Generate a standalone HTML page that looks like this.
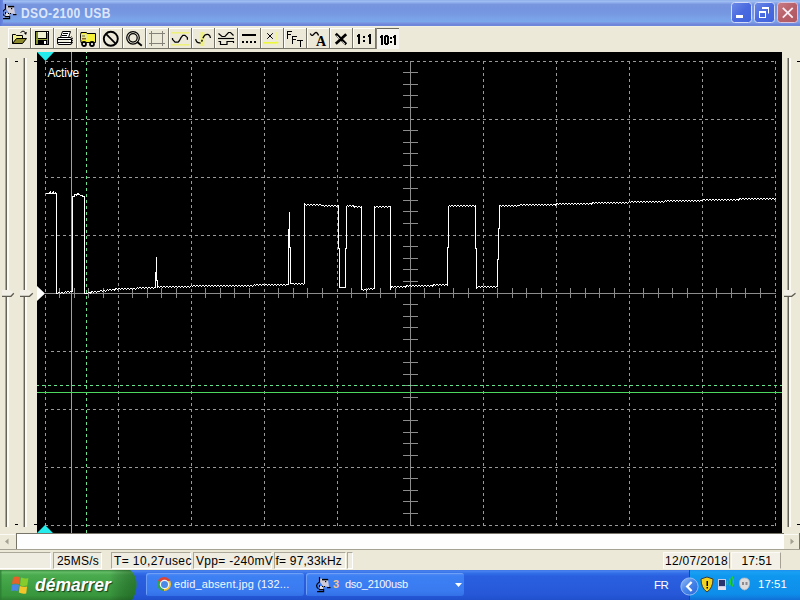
<!DOCTYPE html>
<html><head><meta charset="utf-8">
<style>
*{margin:0;padding:0;box-sizing:border-box}
html,body{width:800px;height:600px;overflow:hidden;background:#ece9d8;font-family:"Liberation Sans",sans-serif}
.abs{position:absolute}
#title{position:absolute;left:0;top:0;width:800px;height:26px;
 background:linear-gradient(to bottom,#90b0ec 0,#9ebcf2 1.5px,#8aa8e8 3px,#7896de 4.5px,#7594e0 8px,#7698e2 14px,#7aa2e8 18px,#7aa6ea 21.5px,#7a94e0 23px,#6e86da 24.5px,#6e86da 26px)}
#title .t{position:absolute;left:21px;top:5px;font-size:14px;font-weight:bold;color:#dde6fa;white-space:nowrap;letter-spacing:0.4px;transform:scaleX(0.86);transform-origin:0 0}
.wb{position:absolute;top:2px;width:21px;height:21px;border:1px solid #cdd8f6;border-radius:3px;background:#5476e0}
.tb{position:absolute;top:28px;width:23px;height:22px;border-style:solid;border-width:1px 1px 1px 1px;border-color:#ffffff #76746a #76746a #ffffff;background:#ece9d8}
.tb.p{border-color:#76746a #ffffff #ffffff #76746a;border-width:1px 1px 1px 2px;background:#f4f2ea}
#scope{position:absolute;left:37px;top:52px;width:745px;height:481px;background:#000}
.st{position:absolute;top:552px;height:17px;border-style:solid;border-width:1px;border-color:#aca899 #fff #fff #aca899;font-size:12px;line-height:15px;padding-top:1px;color:#000;white-space:nowrap;padding-left:4px;background:#efece2}
#taskbar{position:absolute;left:0;top:570px;width:800px;height:30px;
 background:linear-gradient(to bottom,#3a70e2 0,#4a84f0 1px,#3470e8 3px,#2a60e0 6px,#2658d8 24px,#2050cc 30px)}
.tbtn{position:absolute;top:3px;width:158px;height:23px;border-radius:3px;background:linear-gradient(to bottom,#5a8ef4 0,#3c80f4 3px,#3a7af0 18px,#3270e8 23px);box-shadow:inset 1px 1px 0 #6ea0f8}
.tbtn span{position:absolute;top:5px;font-size:11px;color:#f4f8ff;white-space:nowrap;letter-spacing:-0.3px}
.chrome{left:11px;top:4px!important;width:14px;height:14px;border-radius:50%;background:conic-gradient(from -60deg,#dc4434 0 120deg,#f2c228 120deg 240deg,#2fa352 240deg 360deg)}
.chrome::after{content:"";position:absolute;left:3.5px;top:3.5px;width:7px;height:7px;border-radius:50%;background:#4a8ae6;box-shadow:0 0 0 1.2px #f4f4f4}
</style></head><body>
<div id="title">
 <svg class="abs" style="left:0;top:0" width="20" height="26">
  <polygon points="6,5.5 14,6.5 15,14 9,13 6,9" fill="#cfcbd8"/>
  <rect x="6" y="13" width="3" height="3" fill="#dedae2"/>
  <g fill="none" stroke="#000" stroke-width="1.2">
   <path d="M5.5 4 V9 Q2.6 10.5 2.6 12.8 Q2.8 15 4.5 15.8"/>
   <path d="M3 18.6 H9.6 V16.6 H4.8"/>
   <line x1="8" y1="6.6" x2="14.2" y2="6.6" stroke-width="1.5"/>
   <line x1="13" y1="14.6" x2="16.5" y2="14.6"/>
  </g>
  <rect x="11" y="8" width="1.2" height="1.2" fill="#000"/><rect x="5" y="12" width="1" height="2" fill="#000"/><rect x="8" y="13" width="1" height="1" fill="#000"/><rect x="10" y="13" width="1" height="1" fill="#000"/>
 </svg>
 <div class="abs" style="left:0;top:0;width:3px;height:26px;background:linear-gradient(to right,#5a78d6,#6c8ade)"></div>
 <div class="t">DSO-2100 USB</div>
 <svg class="abs" style="left:730px;top:1px" width="70" height="24">
  <defs>
   <linearGradient id="gb" x1="0" y1="0" x2="1" y2="1"><stop offset="0" stop-color="#6d8be6"/><stop offset="0.5" stop-color="#4a6ae0"/><stop offset="1" stop-color="#3f63dc"/></linearGradient>
   <linearGradient id="gr" x1="0" y1="0" x2="1" y2="1"><stop offset="0" stop-color="#c87c84"/><stop offset="0.5" stop-color="#b8606a"/><stop offset="1" stop-color="#b05862"/></linearGradient>
  </defs>
  <rect x="1.5" y="1.5" width="20" height="20" rx="3" fill="url(#gb)" stroke="#d2dcf8"/>
  <rect x="6" y="14" width="7" height="3" fill="#fff"/>
  <rect x="24.5" y="1.5" width="20" height="20" rx="3" fill="url(#gb)" stroke="#d2dcf8"/>
  <path d="M32.5 6.5 H38.5 V12.5" fill="none" stroke="#fff" stroke-width="1"/><rect x="32" y="6" width="7" height="2" fill="#fff"/>
  <rect x="29.5" y="10.5" width="6" height="6" fill="none" stroke="#fff"/><rect x="29" y="10" width="7" height="2" fill="#fff"/>
  <rect x="47.5" y="1.5" width="20" height="20" rx="3" fill="url(#gr)" stroke="#dcc4dc"/>
  <g stroke="#fbeef4" stroke-width="1.8"><line x1="52.8" y1="6.8" x2="62.7" y2="16.7"/><line x1="62.7" y1="6.8" x2="52.8" y2="16.7"/></g>
 </svg>
</div>
<svg class="abs" style="left:0;top:26px" width="420" height="26" viewBox="0 26 420 26" shape-rendering="crispEdges">
<rect x="8" y="28" width="22" height="1" fill="#fdfdfb"/><rect x="8" y="28" width="1" height="21" fill="#fdfdfb"/>
<rect x="30" y="28" width="1" height="21" fill="#77746a"/><rect x="8" y="48" width="22" height="1" fill="#77746a"/>
<rect x="31" y="28" width="22" height="1" fill="#fdfdfb"/><rect x="31" y="28" width="1" height="21" fill="#fdfdfb"/>
<rect x="53" y="28" width="1" height="21" fill="#77746a"/><rect x="31" y="48" width="22" height="1" fill="#77746a"/>
<rect x="54" y="28" width="22" height="1" fill="#fdfdfb"/><rect x="54" y="28" width="1" height="21" fill="#fdfdfb"/>
<rect x="76" y="28" width="1" height="21" fill="#77746a"/><rect x="54" y="48" width="22" height="1" fill="#77746a"/>
<rect x="77" y="28" width="22" height="1" fill="#fdfdfb"/><rect x="77" y="28" width="1" height="21" fill="#fdfdfb"/>
<rect x="99" y="28" width="1" height="21" fill="#77746a"/><rect x="77" y="48" width="22" height="1" fill="#77746a"/>
<rect x="100" y="28" width="22" height="1" fill="#fdfdfb"/><rect x="100" y="28" width="1" height="21" fill="#fdfdfb"/>
<rect x="122" y="28" width="1" height="21" fill="#77746a"/><rect x="100" y="48" width="22" height="1" fill="#77746a"/>
<rect x="123" y="28" width="22" height="1" fill="#fdfdfb"/><rect x="123" y="28" width="1" height="21" fill="#fdfdfb"/>
<rect x="145" y="28" width="1" height="21" fill="#77746a"/><rect x="123" y="48" width="22" height="1" fill="#77746a"/>
<rect x="146" y="28" width="22" height="1" fill="#fdfdfb"/><rect x="146" y="28" width="1" height="21" fill="#fdfdfb"/>
<rect x="168" y="28" width="1" height="21" fill="#77746a"/><rect x="146" y="48" width="22" height="1" fill="#77746a"/>
<rect x="169" y="28" width="22" height="1" fill="#fdfdfb"/><rect x="169" y="28" width="1" height="21" fill="#fdfdfb"/>
<rect x="191" y="28" width="1" height="21" fill="#77746a"/><rect x="169" y="48" width="22" height="1" fill="#77746a"/>
<rect x="192" y="28" width="22" height="1" fill="#fdfdfb"/><rect x="192" y="28" width="1" height="21" fill="#fdfdfb"/>
<rect x="214" y="28" width="1" height="21" fill="#77746a"/><rect x="192" y="48" width="22" height="1" fill="#77746a"/>
<rect x="215" y="28" width="22" height="1" fill="#fdfdfb"/><rect x="215" y="28" width="1" height="21" fill="#fdfdfb"/>
<rect x="237" y="28" width="1" height="21" fill="#77746a"/><rect x="215" y="48" width="22" height="1" fill="#77746a"/>
<rect x="238" y="28" width="22" height="1" fill="#fdfdfb"/><rect x="238" y="28" width="1" height="21" fill="#fdfdfb"/>
<rect x="260" y="28" width="1" height="21" fill="#77746a"/><rect x="238" y="48" width="22" height="1" fill="#77746a"/>
<rect x="261" y="28" width="22" height="1" fill="#fdfdfb"/><rect x="261" y="28" width="1" height="21" fill="#fdfdfb"/>
<rect x="283" y="28" width="1" height="21" fill="#77746a"/><rect x="261" y="48" width="22" height="1" fill="#77746a"/>
<rect x="284" y="28" width="22" height="1" fill="#fdfdfb"/><rect x="284" y="28" width="1" height="21" fill="#fdfdfb"/>
<rect x="306" y="28" width="1" height="21" fill="#77746a"/><rect x="284" y="48" width="22" height="1" fill="#77746a"/>
<rect x="307" y="28" width="22" height="1" fill="#fdfdfb"/><rect x="307" y="28" width="1" height="21" fill="#fdfdfb"/>
<rect x="329" y="28" width="1" height="21" fill="#77746a"/><rect x="307" y="48" width="22" height="1" fill="#77746a"/>
<rect x="330" y="28" width="22" height="1" fill="#fdfdfb"/><rect x="330" y="28" width="1" height="21" fill="#fdfdfb"/>
<rect x="352" y="28" width="1" height="21" fill="#77746a"/><rect x="330" y="48" width="22" height="1" fill="#77746a"/>
<rect x="353" y="28" width="22" height="1" fill="#fdfdfb"/><rect x="353" y="28" width="1" height="21" fill="#fdfdfb"/>
<rect x="375" y="28" width="1" height="21" fill="#77746a"/><rect x="353" y="48" width="22" height="1" fill="#77746a"/>
<rect x="377" y="29" width="22" height="20" fill="#f5f4ee"/>
<rect x="376" y="28" width="23" height="1" fill="#6c695e"/><rect x="376" y="28" width="1" height="21" fill="#8c897c"/>
</svg>
<svg class="abs" style="left:8px;top:28px" width="23" height="21"><path d="M4.5 15.5 V6.5 H7.5 L8.5 7.5 H14.5 V10.5" fill="#f2f08c" stroke="#000"/>
<polygon points="4.5,15.5 8.5,10.5 18.5,10.5 14.5,15.5" fill="#8c8a2c" stroke="#000" stroke-linejoin="miter"/>
<path d="M12.5 4.5 Q15 1.5 17.5 4.5" fill="none" stroke="#000"/>
<polygon points="16,5 19,4 18,7" fill="#000"/></svg>
<svg class="abs" style="left:31px;top:28px" width="23" height="21"><rect x="4" y="3" width="14" height="14" fill="#000"/>
<rect x="5" y="4" width="2" height="12" fill="#7f8a2a"/>
<rect x="16" y="5" width="1" height="11" fill="#7f8a2a"/>
<rect x="7" y="4" width="8" height="6" fill="#f2f2d4"/>
<rect x="5" y="11" width="12" height="1" fill="#9aa640"/>
<rect x="13" y="13" width="2" height="3" fill="#fff"/>
<rect x="16" y="4" width="1" height="1" fill="#fff"/></svg>
<svg class="abs" style="left:54px;top:28px" width="23" height="21"><polygon points="8.5,3.5 16.5,3.5 14.5,9.5 6.5,9.5" fill="#fff" stroke="#000"/>
<rect x="9" y="5" width="5" height="1" fill="#000"/><rect x="8" y="7" width="5" height="1" fill="#000"/>
<rect x="3.5" y="9.5" width="14" height="7" rx="1.5" fill="#fff" stroke="#000"/>
<rect x="4" y="11" width="13" height="1" fill="#000"/><rect x="4" y="14" width="13" height="1" fill="#000"/>
<rect x="5" y="12" width="10" height="2" fill="#f0f0e0"/>
<path d="M17.5 8.5 L18.5 10 V15 L17 16.5" fill="none" stroke="#000" stroke-dasharray="1 1"/></svg>
<svg class="abs" style="left:77px;top:28px" width="23" height="21"><polygon points="4,4.5 9.5,4.5 10,5.5 18.5,5.5 18.5,14.5 4,14.5 3.5,8" fill="#f2ee30" stroke="#000"/>
<rect x="10" y="6" width="8" height="7" fill="#f6f23a"/>
<rect x="4" y="6" width="6" height="6" fill="#e8e890"/>
<rect x="5" y="7" width="3" height="2" fill="#a8a860"/>
<rect x="5" y="10" width="4" height="1.5" fill="#8a6a20"/>
<circle cx="7" cy="16" r="2" fill="#fff" stroke="#000" stroke-width="1.8"/>
<circle cx="15" cy="16" r="2" fill="#fff" stroke="#000" stroke-width="1.8"/></svg>
<svg class="abs" style="left:100px;top:28px" width="23" height="21"><circle cx="10.8" cy="10.8" r="7" fill="none" stroke="#000" stroke-width="1.9"/>
<line x1="6.2" y1="6.2" x2="15.6" y2="15.6" stroke="#000" stroke-width="1.7"/></svg>
<svg class="abs" style="left:123px;top:28px" width="23" height="21"><circle cx="10" cy="9.8" r="6.3" fill="none" stroke="#000" stroke-width="1.25"/>
<circle cx="10" cy="9.8" r="4.2" fill="none" stroke="#000" stroke-width="1.25"/>
<line x1="14.3" y1="14" x2="18.8" y2="17.8" stroke="#000" stroke-width="1.8"/></svg>
<svg class="abs" style="left:146px;top:28px" width="23" height="21"><g stroke="#85827a" shape-rendering="crispEdges"><line x1="3" y1="5.5" x2="19" y2="5.5"/><line x1="3" y1="15.5" x2="19" y2="15.5"/>
<line x1="5.5" y1="3" x2="5.5" y2="18" /><line x1="16.5" y1="3" x2="16.5" y2="18"/></g></svg>
<svg class="abs" style="left:169px;top:28px" width="23" height="21"><rect x="2" y="4" width="18" height="1.6" fill="#eef07e"/><rect x="2" y="16" width="18" height="1.6" fill="#eef07e"/>
<path d="M3.5 10 V11.3 L6 14.2 H9.2 L10.5 12.5 L12 9.6 L13.8 7.4 H16 L18.4 9.6 V11.8" fill="none" stroke="#000" stroke-width="1.25" stroke-linejoin="round"/></svg>
<svg class="abs" style="left:192px;top:28px" width="23" height="21"><defs><linearGradient id="gy2" x1="0" y1="0" x2="1" y2="0"><stop offset="0" stop-color="#f0f470" stop-opacity="0"/><stop offset="0.5" stop-color="#eef266" stop-opacity="0.85"/><stop offset="1" stop-color="#f0f470" stop-opacity="0"/></linearGradient></defs>
<polygon points="8,4 14,4 12.5,18 6.5,18" fill="url(#gy2)"/>
<path d="M3.6 11.2 C4.5 15 6.5 15.2 8.5 14.8 C10.2 14.2 10.5 9 13 7 C15.5 5.5 18 6.5 18.5 10" fill="none" stroke="#000" stroke-width="1.3" stroke-dasharray="7 1.5 2 1.5 20"/></svg>
<svg class="abs" style="left:215px;top:28px" width="23" height="21"><g fill="none" stroke="#000" stroke-width="1.2"><path d="M3.5 5.5 L7 8.5 H10 L13.5 4.5 H15.5 L18.5 7.5"/>
<line x1="3" y1="10.5" x2="19" y2="10.5"/>
<path d="M3.5 13.5 H5.5 V16.5 H12 V13.5 H18.5 V15"/></g></svg>
<svg class="abs" style="left:238px;top:28px" width="23" height="21"><rect x="4" y="6" width="14" height="2" fill="#000"/>
<rect x="4" y="13" width="2" height="2" fill="#000"/><rect x="8" y="13" width="2" height="2" fill="#000"/><rect x="12" y="13" width="2" height="2" fill="#000"/><rect x="16" y="13" width="2" height="2" fill="#000"/></svg>
<svg class="abs" style="left:261px;top:28px" width="23" height="21"><rect x="15" y="4" width="1.6" height="8" fill="#f2f68a" opacity="0.85"/>
<path d="M2 14.8 H17" stroke="#eef83a" stroke-width="1.6"/><path d="M14.5 13.3 L18 14.8 L14.5 16.3 Z" fill="#eef83a"/>
<rect x="15" y="15" width="1.5" height="3" fill="#f4f8a0" opacity="0.6"/>
<g stroke="#000" stroke-width="1"><line x1="6.2" y1="5.2" x2="11.8" y2="10.8"/><line x1="11.8" y1="5.2" x2="6.2" y2="10.8"/></g>
<rect x="8" y="7" width="2" height="2" fill="#000"/></svg>
<svg class="abs" style="left:284px;top:28px" width="23" height="21"><g fill="none" stroke="#000" stroke-width="1.2" shape-rendering="crispEdges">
<path d="M3.5 10.5 V3.5 H8"/><line x1="3.5" y1="6.5" x2="7" y2="6.5"/>
<path d="M8.5 15.5 V8.5 H13"/><line x1="8.5" y1="11.5" x2="12" y2="11.5"/>
<line x1="13" y1="12.5" x2="19" y2="12.5"/><line x1="16.5" y1="12.5" x2="16.5" y2="19"/></g></svg>
<svg class="abs" style="left:307px;top:28px" width="23" height="21"><path d="M3.3 5.5 Q4.5 8.2 6 7 L8.5 4.6 Q10.2 3.8 11.6 7.6" fill="none" stroke="#000" stroke-width="1.35"/>
<text x="14" y="17.5" font-family="Liberation Serif" font-weight="bold" font-size="14" text-anchor="middle" fill="#000">A</text></svg>
<svg class="abs" style="left:330px;top:28px" width="23" height="21"><g stroke="#000" stroke-width="2.7"><line x1="5.8" y1="5.8" x2="16.2" y2="16.2"/><line x1="16.2" y1="6.2" x2="5.8" y2="15.8"/></g>
<g stroke="#fff" stroke-width="0.9"><line x1="6.8" y1="7.6" x2="9.6" y2="10.8"/><line x1="12.4" y1="13.6" x2="15" y2="16.2"/></g></svg>
<svg class="abs" style="left:353px;top:28px" width="23" height="21"><g fill="#000" shape-rendering="crispEdges"><rect x="5" y="6" width="2" height="10"/><rect x="4" y="7" width="1" height="2"/>
<rect x="10" y="8" width="2" height="2"/><rect x="10" y="12" width="2" height="2"/>
<rect x="16" y="6" width="2" height="10"/><rect x="15" y="7" width="1" height="2"/></g></svg>
<svg class="abs" style="left:376px;top:28px" width="23" height="21"><g fill="#000" shape-rendering="crispEdges"><rect x="5" y="7" width="2" height="10"/><rect x="4" y="8" width="1" height="2"/>
<path d="M9 7 H12 V8 H13 V16 H12 V17 H9 V16 H8 V8 H9 Z M10 9 V15 H11 V9 Z" fill-rule="evenodd"/>
<rect x="14" y="9" width="2" height="2"/><rect x="14" y="13" width="2" height="2"/>
<rect x="18" y="7" width="2" height="10"/><rect x="17" y="8" width="1" height="2"/></g></svg>
<div class="abs" style="left:0;top:26px;width:800px;height:1px;background:#eef1e2"></div>
<div id="scope"></div>
<svg class="abs" style="left:37px;top:52px" width="745" height="481" viewBox="37 52 745 481" shape-rendering="crispEdges">
<line x1="45.5" y1="61" x2="45.5" y2="526" stroke="#999999" stroke-dasharray="3 3"/>
<line x1="118.5" y1="61" x2="118.5" y2="526" stroke="#999999" stroke-dasharray="3 3"/>
<line x1="191.5" y1="61" x2="191.5" y2="526" stroke="#999999" stroke-dasharray="3 3"/>
<line x1="264.5" y1="61" x2="264.5" y2="526" stroke="#999999" stroke-dasharray="3 3"/>
<line x1="337.5" y1="61" x2="337.5" y2="526" stroke="#999999" stroke-dasharray="3 3"/>
<line x1="483.5" y1="61" x2="483.5" y2="526" stroke="#999999" stroke-dasharray="3 3"/>
<line x1="556.5" y1="61" x2="556.5" y2="526" stroke="#999999" stroke-dasharray="3 3"/>
<line x1="629.5" y1="61" x2="629.5" y2="526" stroke="#999999" stroke-dasharray="3 3"/>
<line x1="702.5" y1="61" x2="702.5" y2="526" stroke="#999999" stroke-dasharray="3 3"/>
<line x1="775.5" y1="61" x2="775.5" y2="526" stroke="#999999" stroke-dasharray="3 3"/>
<line x1="45" y1="61.5" x2="776" y2="61.5" stroke="#999999" stroke-dasharray="3 3"/>
<line x1="45" y1="119.5" x2="776" y2="119.5" stroke="#999999" stroke-dasharray="3 3"/>
<line x1="45" y1="177.5" x2="776" y2="177.5" stroke="#999999" stroke-dasharray="3 3"/>
<line x1="45" y1="235.5" x2="776" y2="235.5" stroke="#999999" stroke-dasharray="3 3"/>
<line x1="45" y1="351.5" x2="776" y2="351.5" stroke="#999999" stroke-dasharray="3 3"/>
<line x1="45" y1="409.5" x2="776" y2="409.5" stroke="#999999" stroke-dasharray="3 3"/>
<line x1="45" y1="467.5" x2="776" y2="467.5" stroke="#999999" stroke-dasharray="3 3"/>
<line x1="45" y1="525.5" x2="776" y2="525.5" stroke="#999999" stroke-dasharray="3 3"/>
<line x1="410.5" y1="61" x2="410.5" y2="526" stroke="#8c8c8c"/>
<line x1="45" y1="293.5" x2="776" y2="293.5" stroke="#8c8c8c"/>
<line x1="403" y1="72.5" x2="418" y2="72.5" stroke="#8c8c8c"/>
<line x1="403" y1="84.5" x2="418" y2="84.5" stroke="#8c8c8c"/>
<line x1="403" y1="95.5" x2="418" y2="95.5" stroke="#8c8c8c"/>
<line x1="403" y1="107.5" x2="418" y2="107.5" stroke="#8c8c8c"/>
<line x1="403" y1="130.5" x2="418" y2="130.5" stroke="#8c8c8c"/>
<line x1="403" y1="142.5" x2="418" y2="142.5" stroke="#8c8c8c"/>
<line x1="403" y1="153.5" x2="418" y2="153.5" stroke="#8c8c8c"/>
<line x1="403" y1="165.5" x2="418" y2="165.5" stroke="#8c8c8c"/>
<line x1="403" y1="188.5" x2="418" y2="188.5" stroke="#8c8c8c"/>
<line x1="403" y1="200.5" x2="418" y2="200.5" stroke="#8c8c8c"/>
<line x1="403" y1="211.5" x2="418" y2="211.5" stroke="#8c8c8c"/>
<line x1="403" y1="223.5" x2="418" y2="223.5" stroke="#8c8c8c"/>
<line x1="403" y1="246.5" x2="418" y2="246.5" stroke="#8c8c8c"/>
<line x1="403" y1="258.5" x2="418" y2="258.5" stroke="#8c8c8c"/>
<line x1="403" y1="269.5" x2="418" y2="269.5" stroke="#8c8c8c"/>
<line x1="403" y1="281.5" x2="418" y2="281.5" stroke="#8c8c8c"/>
<line x1="403" y1="304.5" x2="418" y2="304.5" stroke="#8c8c8c"/>
<line x1="403" y1="316.5" x2="418" y2="316.5" stroke="#8c8c8c"/>
<line x1="403" y1="327.5" x2="418" y2="327.5" stroke="#8c8c8c"/>
<line x1="403" y1="339.5" x2="418" y2="339.5" stroke="#8c8c8c"/>
<line x1="403" y1="362.5" x2="418" y2="362.5" stroke="#8c8c8c"/>
<line x1="403" y1="374.5" x2="418" y2="374.5" stroke="#8c8c8c"/>
<line x1="403" y1="385.5" x2="418" y2="385.5" stroke="#8c8c8c"/>
<line x1="403" y1="397.5" x2="418" y2="397.5" stroke="#8c8c8c"/>
<line x1="403" y1="420.5" x2="418" y2="420.5" stroke="#8c8c8c"/>
<line x1="403" y1="432.5" x2="418" y2="432.5" stroke="#8c8c8c"/>
<line x1="403" y1="443.5" x2="418" y2="443.5" stroke="#8c8c8c"/>
<line x1="403" y1="455.5" x2="418" y2="455.5" stroke="#8c8c8c"/>
<line x1="403" y1="478.5" x2="418" y2="478.5" stroke="#8c8c8c"/>
<line x1="403" y1="490.5" x2="418" y2="490.5" stroke="#8c8c8c"/>
<line x1="403" y1="501.5" x2="418" y2="501.5" stroke="#8c8c8c"/>
<line x1="403" y1="513.5" x2="418" y2="513.5" stroke="#8c8c8c"/>
<line x1="59.5" y1="288" x2="59.5" y2="298" stroke="#8c8c8c"/>
<line x1="74.5" y1="288" x2="74.5" y2="298" stroke="#8c8c8c"/>
<line x1="88.5" y1="288" x2="88.5" y2="298" stroke="#8c8c8c"/>
<line x1="103.5" y1="288" x2="103.5" y2="298" stroke="#8c8c8c"/>
<line x1="132.5" y1="288" x2="132.5" y2="298" stroke="#8c8c8c"/>
<line x1="147.5" y1="288" x2="147.5" y2="298" stroke="#8c8c8c"/>
<line x1="161.5" y1="288" x2="161.5" y2="298" stroke="#8c8c8c"/>
<line x1="176.5" y1="288" x2="176.5" y2="298" stroke="#8c8c8c"/>
<line x1="205.5" y1="288" x2="205.5" y2="298" stroke="#8c8c8c"/>
<line x1="220.5" y1="288" x2="220.5" y2="298" stroke="#8c8c8c"/>
<line x1="234.5" y1="288" x2="234.5" y2="298" stroke="#8c8c8c"/>
<line x1="249.5" y1="288" x2="249.5" y2="298" stroke="#8c8c8c"/>
<line x1="278.5" y1="288" x2="278.5" y2="298" stroke="#8c8c8c"/>
<line x1="293.5" y1="288" x2="293.5" y2="298" stroke="#8c8c8c"/>
<line x1="307.5" y1="288" x2="307.5" y2="298" stroke="#8c8c8c"/>
<line x1="322.5" y1="288" x2="322.5" y2="298" stroke="#8c8c8c"/>
<line x1="351.5" y1="288" x2="351.5" y2="298" stroke="#8c8c8c"/>
<line x1="366.5" y1="288" x2="366.5" y2="298" stroke="#8c8c8c"/>
<line x1="380.5" y1="288" x2="380.5" y2="298" stroke="#8c8c8c"/>
<line x1="395.5" y1="288" x2="395.5" y2="298" stroke="#8c8c8c"/>
<line x1="424.5" y1="288" x2="424.5" y2="298" stroke="#8c8c8c"/>
<line x1="439.5" y1="288" x2="439.5" y2="298" stroke="#8c8c8c"/>
<line x1="453.5" y1="288" x2="453.5" y2="298" stroke="#8c8c8c"/>
<line x1="468.5" y1="288" x2="468.5" y2="298" stroke="#8c8c8c"/>
<line x1="497.5" y1="288" x2="497.5" y2="298" stroke="#8c8c8c"/>
<line x1="512.5" y1="288" x2="512.5" y2="298" stroke="#8c8c8c"/>
<line x1="526.5" y1="288" x2="526.5" y2="298" stroke="#8c8c8c"/>
<line x1="541.5" y1="288" x2="541.5" y2="298" stroke="#8c8c8c"/>
<line x1="570.5" y1="288" x2="570.5" y2="298" stroke="#8c8c8c"/>
<line x1="585.5" y1="288" x2="585.5" y2="298" stroke="#8c8c8c"/>
<line x1="599.5" y1="288" x2="599.5" y2="298" stroke="#8c8c8c"/>
<line x1="614.5" y1="288" x2="614.5" y2="298" stroke="#8c8c8c"/>
<line x1="643.5" y1="288" x2="643.5" y2="298" stroke="#8c8c8c"/>
<line x1="658.5" y1="288" x2="658.5" y2="298" stroke="#8c8c8c"/>
<line x1="672.5" y1="288" x2="672.5" y2="298" stroke="#8c8c8c"/>
<line x1="687.5" y1="288" x2="687.5" y2="298" stroke="#8c8c8c"/>
<line x1="716.5" y1="288" x2="716.5" y2="298" stroke="#8c8c8c"/>
<line x1="731.5" y1="288" x2="731.5" y2="298" stroke="#8c8c8c"/>
<line x1="745.5" y1="288" x2="745.5" y2="298" stroke="#8c8c8c"/>
<line x1="760.5" y1="288" x2="760.5" y2="298" stroke="#8c8c8c"/>
<line x1="71.5" y1="52" x2="71.5" y2="533" stroke="#4cd85e"/>
<line x1="86.5" y1="52" x2="86.5" y2="533" stroke="#6ce28e" stroke-dasharray="3 3" stroke-dashoffset="2"/>
<line x1="37" y1="385.5" x2="782" y2="385.5" stroke="#68e48c" stroke-dasharray="3 3" stroke-dashoffset="1"/>
<line x1="37" y1="392.5" x2="782" y2="392.5" stroke="#4cd85e"/>
<path d="M45.5 193.5 L49.5 193.5 L50.5 191.5 L50.5 193.5 L52.5 193.5 L53.5 191.5 L53.5 193.5 L55.5 193.5 L55.5 191.5 L55.5 193.5 L56.5 193.5 L56.5 293.5 L57.5 293.5 L58.5 292.5 L59.5 292.5 L60.5 293.5 L61.5 292.5 L62.5 292.5 L63.5 293.5 L64.5 292.5 L65.5 291.5 L66.5 292.5 L67.5 291.5 L68.5 291.5 L69.5 292.5 L70.5 291.5 L71.5 291.5 L72.5 291.5 L72.5 196.5 L74.5 196.5 L74.5 194.5 L76.5 194.5 L76.5 195.5 L77.5 193.5 L79.5 194.5 L80.5 195.5 L82.5 195.5 L82.5 196.5 L84.5 196.5 L84.5 293.5 L85.5 293.5 L86.5 293.5 L87.5 293.5 L88.5 292.5 L89.5 292.5 L90.5 293.5 L91.5 291.5 L92.5 291.5 L93.5 292.5 L94.5 291.5 L95.5 291.5 L96.5 292.5 L97.5 291.5 L98.5 291.5 L99.5 291.5 L100.5 290.5 L101.5 290.5 L102.5 291.5 L103.5 290.5 L104.5 290.5 L105.5 291.5 L106.5 290.5 L107.5 289.5 L108.5 290.5 L109.5 289.5 L110.5 289.5 L111.5 290.5 L112.5 289.5 L113.5 289.5 L114.5 290.5 L115.5 288.5 L116.5 288.5 L117.5 289.5 L118.5 288.5 L119.5 288.5 L120.5 289.5 L121.5 288.5 L122.5 288.5 L123.5 289.5 L124.5 288.5 L125.5 288.5 L126.5 289.5 L127.5 288.5 L128.5 288.5 L129.5 289.5 L130.5 288.5 L131.5 288.5 L132.5 289.5 L133.5 288.5 L134.5 288.5 L135.5 289.5 L136.5 288.5 L137.5 287.5 L138.5 288.5 L139.5 287.5 L140.5 287.5 L141.5 288.5 L142.5 287.5 L143.5 287.5 L144.5 288.5 L145.5 287.5 L146.5 287.5 L147.5 288.5 L148.5 287.5 L149.5 287.5 L150.5 288.5 L151.5 287.5 L152.5 287.5 L153.5 288.5 L154.5 287.5 L155.5 287.5 L155.5 272.5 L156.5 272.5 L156.5 256.5 L156.5 280.5 L157.5 280.5 L157.5 287.5 L158.5 286.5 L159.5 287.5 L160.5 286.5 L161.5 286.5 L162.5 287.5 L163.5 286.5 L164.5 286.5 L165.5 287.5 L166.5 286.5 L167.5 286.5 L168.5 287.5 L169.5 286.5 L170.5 286.5 L171.5 287.5 L172.5 286.5 L173.5 286.5 L174.5 287.5 L175.5 286.5 L176.5 286.5 L177.5 287.5 L178.5 286.5 L179.5 286.5 L180.5 287.5 L181.5 286.5 L182.5 286.5 L183.5 287.5 L184.5 286.5 L185.5 286.5 L186.5 287.5 L187.5 286.5 L188.5 286.5 L189.5 287.5 L190.5 286.5 L191.5 285.5 L192.5 286.5 L193.5 285.5 L194.5 285.5 L195.5 286.5 L196.5 285.5 L197.5 285.5 L198.5 286.5 L199.5 285.5 L200.5 285.5 L201.5 286.5 L202.5 285.5 L203.5 285.5 L204.5 286.5 L205.5 285.5 L206.5 285.5 L207.5 286.5 L208.5 285.5 L209.5 285.5 L210.5 286.5 L211.5 285.5 L212.5 285.5 L213.5 286.5 L214.5 285.5 L215.5 285.5 L216.5 286.5 L217.5 285.5 L218.5 285.5 L219.5 286.5 L220.5 285.5 L221.5 285.5 L222.5 286.5 L223.5 285.5 L224.5 285.5 L225.5 286.5 L226.5 285.5 L227.5 285.5 L228.5 286.5 L229.5 285.5 L230.5 285.5 L231.5 286.5 L232.5 285.5 L233.5 285.5 L234.5 286.5 L235.5 285.5 L236.5 285.5 L237.5 286.5 L238.5 285.5 L239.5 285.5 L240.5 286.5 L241.5 285.5 L242.5 285.5 L243.5 286.5 L244.5 285.5 L245.5 285.5 L246.5 286.5 L247.5 285.5 L248.5 285.5 L249.5 286.5 L250.5 285.5 L251.5 285.5 L252.5 286.5 L253.5 285.5 L254.5 284.5 L255.5 285.5 L256.5 284.5 L257.5 284.5 L258.5 285.5 L259.5 284.5 L260.5 284.5 L261.5 285.5 L262.5 284.5 L263.5 284.5 L264.5 285.5 L265.5 284.5 L266.5 284.5 L267.5 285.5 L268.5 284.5 L269.5 284.5 L270.5 285.5 L271.5 284.5 L272.5 284.5 L273.5 285.5 L274.5 284.5 L275.5 284.5 L276.5 285.5 L277.5 284.5 L278.5 284.5 L279.5 285.5 L280.5 284.5 L281.5 284.5 L282.5 285.5 L283.5 284.5 L284.5 284.5 L285.5 285.5 L286.5 284.5 L288.5 284.5 L288.5 229.5 L289.5 229.5 L289.5 211.5 L289.5 247.5 L290.5 247.5 L290.5 283.5 L292.5 283.5 L293.5 283.5 L294.5 284.5 L295.5 283.5 L296.5 283.5 L297.5 284.5 L298.5 283.5 L299.5 283.5 L300.5 284.5 L301.5 283.5 L302.5 283.5 L303.5 284.5 L304.5 283.5 L304.5 203.5 L305.5 204.5 L306.5 205.5 L307.5 204.5 L308.5 204.5 L309.5 205.5 L310.5 204.5 L311.5 204.5 L312.5 205.5 L313.5 204.5 L314.5 204.5 L315.5 205.5 L316.5 204.5 L317.5 204.5 L318.5 205.5 L319.5 204.5 L320.5 204.5 L321.5 205.5 L322.5 205.5 L323.5 205.5 L324.5 206.5 L325.5 205.5 L326.5 205.5 L327.5 206.5 L328.5 205.5 L329.5 205.5 L330.5 206.5 L331.5 205.5 L332.5 205.5 L333.5 206.5 L334.5 205.5 L335.5 205.5 L336.5 206.5 L337.5 205.5 L338.5 205.5 L338.5 248.5 L339.5 248.5 L339.5 287.5 L340.5 287.5 L341.5 287.5 L342.5 287.5 L343.5 287.5 L344.5 287.5 L345.5 287.5 L345.5 287.5 L345.5 248.5 L346.5 248.5 L346.5 206.5 L347.5 205.5 L348.5 206.5 L349.5 205.5 L350.5 205.5 L351.5 206.5 L352.5 205.5 L353.5 205.5 L354.5 207.5 L355.5 206.5 L356.5 206.5 L357.5 207.5 L358.5 206.5 L359.5 206.5 L360.5 207.5 L361.5 206.5 L361.5 289.5 L362.5 289.5 L363.5 290.5 L364.5 289.5 L365.5 289.5 L366.5 290.5 L367.5 289.5 L368.5 288.5 L369.5 289.5 L370.5 288.5 L371.5 288.5 L372.5 289.5 L373.5 288.5 L374.5 288.5 L374.5 206.5 L375.5 207.5 L376.5 206.5 L377.5 206.5 L378.5 207.5 L379.5 206.5 L380.5 206.5 L381.5 207.5 L382.5 206.5 L383.5 206.5 L384.5 207.5 L385.5 206.5 L386.5 206.5 L387.5 207.5 L388.5 206.5 L389.5 206.5 L390.5 206.5 L390.5 289.5 L391.5 286.5 L392.5 286.5 L393.5 287.5 L394.5 286.5 L395.5 286.5 L396.5 287.5 L397.5 286.5 L398.5 286.5 L399.5 287.5 L400.5 286.5 L401.5 286.5 L402.5 287.5 L403.5 286.5 L404.5 286.5 L405.5 287.5 L406.5 285.5 L407.5 285.5 L408.5 286.5 L409.5 285.5 L410.5 285.5 L411.5 286.5 L412.5 285.5 L413.5 285.5 L414.5 286.5 L415.5 285.5 L416.5 285.5 L417.5 286.5 L418.5 285.5 L419.5 285.5 L420.5 286.5 L421.5 285.5 L422.5 285.5 L423.5 286.5 L424.5 285.5 L425.5 285.5 L426.5 286.5 L427.5 285.5 L428.5 285.5 L429.5 286.5 L430.5 285.5 L431.5 285.5 L432.5 286.5 L433.5 284.5 L434.5 284.5 L435.5 285.5 L436.5 284.5 L437.5 284.5 L438.5 285.5 L439.5 284.5 L440.5 284.5 L441.5 285.5 L442.5 284.5 L443.5 284.5 L444.5 285.5 L445.5 284.5 L446.5 284.5 L447.5 285.5 L447.5 284.5 L447.5 247.5 L448.5 247.5 L448.5 206.5 L449.5 205.5 L450.5 206.5 L451.5 205.5 L452.5 205.5 L453.5 206.5 L454.5 205.5 L455.5 205.5 L456.5 206.5 L457.5 205.5 L458.5 205.5 L459.5 206.5 L460.5 205.5 L461.5 205.5 L462.5 206.5 L463.5 205.5 L464.5 205.5 L465.5 206.5 L466.5 205.5 L467.5 205.5 L468.5 206.5 L469.5 205.5 L470.5 205.5 L471.5 206.5 L472.5 205.5 L473.5 205.5 L474.5 206.5 L475.5 205.5 L475.5 248.5 L476.5 248.5 L476.5 288.5 L477.5 287.5 L478.5 286.5 L479.5 286.5 L480.5 287.5 L481.5 286.5 L482.5 286.5 L483.5 287.5 L484.5 286.5 L485.5 286.5 L486.5 287.5 L487.5 286.5 L488.5 286.5 L489.5 287.5 L490.5 286.5 L491.5 286.5 L492.5 287.5 L493.5 286.5 L494.5 286.5 L495.5 287.5 L496.5 286.5 L497.5 286.5 L497.5 259.5 L498.5 259.5 L498.5 228.5 L499.5 228.5 L499.5 205.5 L500.5 205.5 L501.5 206.5 L502.5 205.5 L503.5 205.5 L504.5 206.5 L505.5 205.5 L506.5 205.5 L507.5 206.5 L508.5 205.5 L509.5 205.5 L510.5 206.5 L511.5 205.5 L512.5 205.5 L513.5 206.5 L514.5 205.5 L515.5 205.5 L516.5 206.5 L517.5 205.5 L518.5 205.5 L519.5 205.5 L520.5 204.5 L521.5 204.5 L522.5 205.5 L523.5 204.5 L524.5 204.5 L525.5 205.5 L526.5 204.5 L527.5 204.5 L528.5 205.5 L529.5 204.5 L530.5 204.5 L531.5 205.5 L532.5 204.5 L533.5 204.5 L534.5 205.5 L535.5 204.5 L536.5 204.5 L537.5 205.5 L538.5 204.5 L539.5 204.5 L540.5 205.5 L541.5 204.5 L542.5 204.5 L543.5 205.5 L544.5 204.5 L545.5 204.5 L546.5 205.5 L547.5 204.5 L548.5 204.5 L549.5 205.5 L550.5 204.5 L551.5 204.5 L552.5 205.5 L553.5 204.5 L554.5 204.5 L555.5 205.5 L556.5 203.5 L557.5 203.5 L558.5 204.5 L559.5 203.5 L560.5 203.5 L561.5 204.5 L562.5 203.5 L563.5 203.5 L564.5 204.5 L565.5 203.5 L566.5 203.5 L567.5 204.5 L568.5 203.5 L569.5 203.5 L570.5 204.5 L571.5 203.5 L572.5 203.5 L573.5 204.5 L574.5 203.5 L575.5 203.5 L576.5 204.5 L577.5 203.5 L578.5 203.5 L579.5 204.5 L580.5 203.5 L581.5 203.5 L582.5 204.5 L583.5 203.5 L584.5 203.5 L585.5 204.5 L586.5 203.5 L587.5 203.5 L588.5 204.5 L589.5 203.5 L590.5 203.5 L591.5 204.5 L592.5 202.5 L593.5 202.5 L594.5 203.5 L595.5 202.5 L596.5 202.5 L597.5 203.5 L598.5 202.5 L599.5 202.5 L600.5 203.5 L601.5 202.5 L602.5 202.5 L603.5 203.5 L604.5 202.5 L605.5 202.5 L606.5 203.5 L607.5 202.5 L608.5 202.5 L609.5 203.5 L610.5 202.5 L611.5 202.5 L612.5 203.5 L613.5 202.5 L614.5 202.5 L615.5 203.5 L616.5 202.5 L617.5 202.5 L618.5 203.5 L619.5 202.5 L620.5 202.5 L621.5 203.5 L622.5 202.5 L623.5 202.5 L624.5 203.5 L625.5 202.5 L626.5 202.5 L627.5 203.5 L628.5 202.5 L629.5 201.5 L630.5 202.5 L631.5 201.5 L632.5 201.5 L633.5 202.5 L634.5 201.5 L635.5 201.5 L636.5 202.5 L637.5 201.5 L638.5 201.5 L639.5 202.5 L640.5 201.5 L641.5 201.5 L642.5 202.5 L643.5 201.5 L644.5 201.5 L645.5 202.5 L646.5 201.5 L647.5 201.5 L648.5 202.5 L649.5 201.5 L650.5 201.5 L651.5 202.5 L652.5 201.5 L653.5 201.5 L654.5 202.5 L655.5 201.5 L656.5 201.5 L657.5 202.5 L658.5 201.5 L659.5 201.5 L660.5 202.5 L661.5 201.5 L662.5 201.5 L663.5 202.5 L664.5 201.5 L665.5 200.5 L666.5 201.5 L667.5 200.5 L668.5 200.5 L669.5 201.5 L670.5 200.5 L671.5 200.5 L672.5 201.5 L673.5 200.5 L674.5 200.5 L675.5 201.5 L676.5 200.5 L677.5 200.5 L678.5 201.5 L679.5 200.5 L680.5 200.5 L681.5 201.5 L682.5 200.5 L683.5 200.5 L684.5 201.5 L685.5 200.5 L686.5 200.5 L687.5 201.5 L688.5 200.5 L689.5 200.5 L690.5 201.5 L691.5 200.5 L692.5 200.5 L693.5 201.5 L694.5 200.5 L695.5 200.5 L696.5 201.5 L697.5 200.5 L698.5 200.5 L699.5 201.5 L700.5 200.5 L701.5 200.5 L702.5 200.5 L703.5 199.5 L704.5 199.5 L705.5 200.5 L706.5 199.5 L707.5 199.5 L708.5 200.5 L709.5 199.5 L710.5 199.5 L711.5 200.5 L712.5 199.5 L713.5 199.5 L714.5 200.5 L715.5 199.5 L716.5 199.5 L717.5 200.5 L718.5 199.5 L719.5 199.5 L720.5 200.5 L721.5 199.5 L722.5 199.5 L723.5 200.5 L724.5 199.5 L725.5 199.5 L726.5 200.5 L727.5 199.5 L728.5 199.5 L729.5 200.5 L730.5 199.5 L731.5 199.5 L732.5 200.5 L733.5 199.5 L734.5 199.5 L735.5 200.5 L736.5 199.5 L737.5 199.5 L738.5 200.5 L739.5 198.5 L740.5 198.5 L741.5 199.5 L742.5 198.5 L743.5 198.5 L744.5 199.5 L745.5 198.5 L746.5 198.5 L747.5 199.5 L748.5 198.5 L749.5 198.5 L750.5 199.5 L751.5 198.5 L752.5 198.5 L753.5 199.5 L754.5 198.5 L755.5 198.5 L756.5 199.5 L757.5 198.5 L758.5 198.5 L759.5 199.5 L760.5 198.5 L761.5 198.5 L762.5 199.5 L763.5 198.5 L764.5 198.5 L765.5 199.5 L766.5 198.5 L767.5 198.5 L768.5 199.5 L769.5 198.5 L770.5 198.5 L771.5 199.5 L772.5 198.5 L773.5 198.5 L774.5 199.5 L775.5 198.5" fill="none" stroke="#fff" stroke-width="1"/>
<polygon points="37,52 54,52 45.5,61" fill="#24ecec" shape-rendering="auto"/>
<polygon points="37,533 53,533 45,525" fill="#24ecec" shape-rendering="auto"/>
<polygon points="37,286 45,293.5 37,301" fill="#fff" shape-rendering="auto"/>
<text x="47.5" y="77" font-family="Liberation Sans" font-size="12" letter-spacing="-0.2" fill="#fff">Active</text>
</svg>
<!-- sliders -->
<svg class="abs" style="left:0;top:52px" width="37" height="481" viewBox="0 52 37 481" shape-rendering="crispEdges">
 <rect x="5" y="58" width="1" height="469" fill="#a9a697"/><rect x="6" y="58" width="1" height="469" fill="#66635a"/><rect x="7" y="58" width="2" height="469" fill="#fbfaf3"/>
 <rect x="23" y="58" width="1" height="469" fill="#b3b0a2"/><rect x="24" y="58" width="1" height="469" fill="#66635a"/><rect x="25" y="58" width="2" height="469" fill="#fbfaf3"/>
 <rect x="15" y="61" width="3" height="1" fill="#000"/><rect x="34" y="61" width="3" height="1" fill="#000"/>
 <rect x="15" y="524" width="3" height="1" fill="#000"/><rect x="34" y="524" width="3" height="1" fill="#000"/>
 <g shape-rendering="auto">
 <polygon points="2,290 10.5,290 13.8,293.3 11,296.5 2,296.5" fill="#f1efe6"/>
 <path d="M2 296.3 H11 L13.8 293.3" fill="none" stroke="#5e5b50" stroke-width="1.3"/>
 <polygon points="20,290 29,290 32.8,293.3 29.5,296.5 20,296.5" fill="#f1efe6"/>
 <path d="M20 296.3 H29.5 L32.8 293.3" fill="none" stroke="#5e5b50" stroke-width="1.3"/>
 </g>
</svg>
<svg class="abs" style="left:782px;top:52px" width="18" height="481" viewBox="782 52 18 481" shape-rendering="crispEdges">
 <rect x="787" y="58" width="1" height="469" fill="#a9a697"/><rect x="788" y="58" width="1" height="469" fill="#66635a"/><rect x="789" y="58" width="2" height="469" fill="#fbfaf3"/>
 <rect x="797" y="61" width="3" height="1" fill="#000"/><rect x="797" y="524" width="3" height="1" fill="#000"/>
 <g shape-rendering="auto">
 <polygon points="784,290 792,290 795.5,293.3 792,296.5 784,296.5" fill="#f1efe6"/>
 <path d="M784 296.3 H791.7 L795.5 293.3" fill="none" stroke="#5e5b50" stroke-width="1.3"/>
 </g>
</svg>
<!-- scrollbar -->
<div class="abs" style="left:16px;top:533px;width:768px;height:16px;background:#fefefe;border-left:1px solid #77756a;border-top:1px solid #77756a"></div>
<svg class="abs" style="left:0;top:533px" width="16" height="16"><rect x="0" y="1" width="15" height="1" fill="#fbfaf4"/><polygon points="5,8.5 8.5,5.5 8.5,11.5" fill="#a3a092"/></svg>
<svg class="abs" style="left:784px;top:533px" width="16" height="16"><rect x="0" y="1" width="14" height="1" fill="#fbfaf4"/><rect x="15" y="0" width="1" height="16" fill="#77756a"/><polygon points="10,8.5 6.5,5.5 6.5,11.5" fill="#a3a092"/></svg>
<div class="abs" style="left:0;top:549px;width:800px;height:1px;background:#a5a193"></div>
<!-- status -->
<div class="st" style="left:0;width:51px;border-left:0"></div>
<div class="st" style="left:53px;width:49px;padding-left:3px;letter-spacing:0.2px">25MS/s</div>
<div class="st" style="left:111px;width:80px;padding-left:2px;letter-spacing:0.4px">T= 10,27usec</div>
<div class="st" style="left:193px;width:79px;padding-left:2px;letter-spacing:0.3px">Vpp= -240mV</div>
<div class="st" style="left:274px;width:72px;padding-left:0.5px;letter-spacing:0.2px">f= 97,33kHz</div>
<div class="st" style="left:347px;width:6px"></div>
<div class="st" style="left:663px;width:67px;border-color:#fbfaf4 #a5a193 #f4f2ea #fbfaf4;background:#f2f0e7;padding-left:1px;letter-spacing:0.3px">12/07/2018</div>
<div class="st" style="left:731px;width:50px;border-color:#fbfaf4 #a5a193 #f4f2ea #fbfaf4;background:#f2f0e7;padding-left:9.5px;letter-spacing:0.1px">17:51</div>
<div id="taskbar">
 <svg class="abs" style="left:0;top:0" width="140" height="30">
  <defs><linearGradient id="gs" x1="0" y1="0" x2="0" y2="1">
   <stop offset="0" stop-color="#3a8a3e"/><stop offset="0.07" stop-color="#62bc66"/><stop offset="0.17" stop-color="#4aaa4e"/><stop offset="0.5" stop-color="#3fa044"/><stop offset="0.85" stop-color="#38963c"/><stop offset="1" stop-color="#2e7e32"/></linearGradient>
   <linearGradient id="gsr" x1="0" y1="0" x2="1" y2="0"><stop offset="0.8" stop-color="#000" stop-opacity="0"/><stop offset="1" stop-color="#0a4a12" stop-opacity="0.45"/></linearGradient></defs>
  <path d="M0 0 H130 C134 3 136.5 8 136.5 14 C136.5 21 134.5 26 132 30 H0 Z" fill="url(#gs)"/>
  <path d="M0 0 H130 C134 3 136.5 8 136.5 14 C136.5 21 134.5 26 132 30 H0 Z" fill="url(#gsr)"/>
  <rect x="0" y="0" width="1.5" height="30" fill="#2a7a30" opacity="0.7"/>
 </svg>
 <svg class="abs" style="left:10px;top:6px" width="20" height="19">
  <path d="M3 1.2 Q6.5 -0.3 10.2 1.4 L9.2 8.2 Q5.6 6.7 2 8 Z" fill="#e8602a"/>
  <path d="M11 1.6 Q14.5 3.1 18.4 1.9 L17.3 9.6 Q13.6 10.7 10 9.2 Z" fill="#86cc2c"/>
  <path d="M1.8 8.8 Q5.3 7.4 9 9 L8 15.4 Q4.4 13.9 0.8 15.2 Z" fill="#4a86e6"/>
  <path d="M9.8 10 Q13.3 11.3 17.1 10.4 L16.2 17.4 Q12.2 18.4 8.8 16.6 Z" fill="#f2c62a"/>
 </svg>
 <div class="abs" style="left:35px;top:5px;font-size:17.5px;font-weight:bold;font-style:italic;color:#fff;text-shadow:1px 1px 1px #1c3e1c;letter-spacing:0px">démarrer</div>
 <div class="tbtn" style="left:146px"><span class="chrome"></span><span style="left:28px;letter-spacing:0.15px">edid_absent.jpg (132...</span></div>
 <div class="tbtn" style="left:306px"><svg class="abs" style="left:8px;top:0px" width="20" height="26">
  <polygon points="6,5.5 14,6.5 15,14 9,13 6,9" fill="#cfcbd8"/>
  <rect x="6" y="13" width="3" height="3" fill="#dedae2"/>
  <g fill="none" stroke="#000" stroke-width="1.2">
   <path d="M5.5 4 V9 Q2.6 10.5 2.6 12.8 Q2.8 15 4.5 15.8"/>
   <path d="M3 18.6 H9.6 V16.6 H4.8"/>
   <line x1="8" y1="6.6" x2="14.2" y2="6.6" stroke-width="1.5"/>
   <line x1="13" y1="14.6" x2="16.5" y2="14.6"/>
  </g>
  <rect x="11" y="8" width="1.2" height="1.2" fill="#000"/><rect x="5" y="12" width="1" height="2" fill="#000"/><rect x="8" y="13" width="1" height="1" fill="#000"/><rect x="10" y="13" width="1" height="1" fill="#000"/>
 </svg><span style="left:27px;color:#f6c690;font-weight:bold">3</span><span style="left:39px">dso_2100usb</span><svg class="abs" style="left:149px;top:10px" width="8" height="5"><polygon points="0,0 7,0 3.5,4" fill="#fff"/></svg></div>
 <div class="abs" style="left:654px;top:9px;font-size:11.5px;color:#fff;letter-spacing:-0.4px">FR</div>
 <div class="abs" style="left:689px;top:0;width:111px;height:30px;background:linear-gradient(to bottom,#1e8ef0 0,#18a0f4 2px,#0f97ee 6px,#0d8eea 24px,#1070d8 30px);border-left:1px solid #0a4ac0"></div>
 <svg class="abs" style="left:679px;top:6px" width="21" height="21"><defs><linearGradient id="gch" x1="0" y1="0" x2="1" y2="1"><stop offset="0" stop-color="#9cc0f6"/><stop offset="0.45" stop-color="#4a86ea"/><stop offset="1" stop-color="#2466dc"/></linearGradient></defs><circle cx="10.5" cy="10.5" r="8.6" fill="url(#gch)" stroke="#a0c4f6" stroke-width="0.9"/><path d="M12.6 6 L8.2 10.5 L12.6 15" fill="none" stroke="#fff" stroke-width="2.3"/></svg>
 <svg class="abs" style="left:700px;top:6px" width="15" height="17"><path d="M7 1 L13 3 Q13 12 7 16 Q1 12 1 3 Z" fill="#f2d21e" stroke="#3a3a3a" stroke-width="1"/><rect x="6.5" y="5" width="1.5" height="5" fill="#000"/><rect x="6.5" y="11" width="1.5" height="1.5" fill="#000"/></svg>
 <svg class="abs" style="left:717px;top:5px" width="22" height="17"><rect x="1.5" y="4.5" width="7" height="7" fill="#2a3570" stroke="#c4cce6"/><rect x="1" y="12" width="8" height="3" fill="#e6e2f0"/><path d="M10 10 Q11.2 8 10.2 5.8 M12.6 10.8 Q14.4 7 12.6 3.2 M15.2 11.4 Q17.6 6.5 15.2 1.6" fill="none" stroke="#22d424" stroke-width="1.3"/></svg>
 <svg class="abs" style="left:738px;top:7px" width="13" height="14"><path d="M6.5 1 Q11.5 1 11.5 6 Q11.5 12 6.5 13 Q1.5 12 1.5 6 Q1.5 1 6.5 1 Z" fill="#dcdcdc" stroke="#b8b8c0" stroke-width="0.8"/><rect x="4" y="5" width="2" height="3" fill="#8a8a90"/><rect x="7.5" y="5" width="2" height="3" fill="#8a8a90"/></svg>
 <div class="abs" style="left:758px;top:8px;font-size:11.5px;color:#fff">17:51</div>
</div>

</body></html>
